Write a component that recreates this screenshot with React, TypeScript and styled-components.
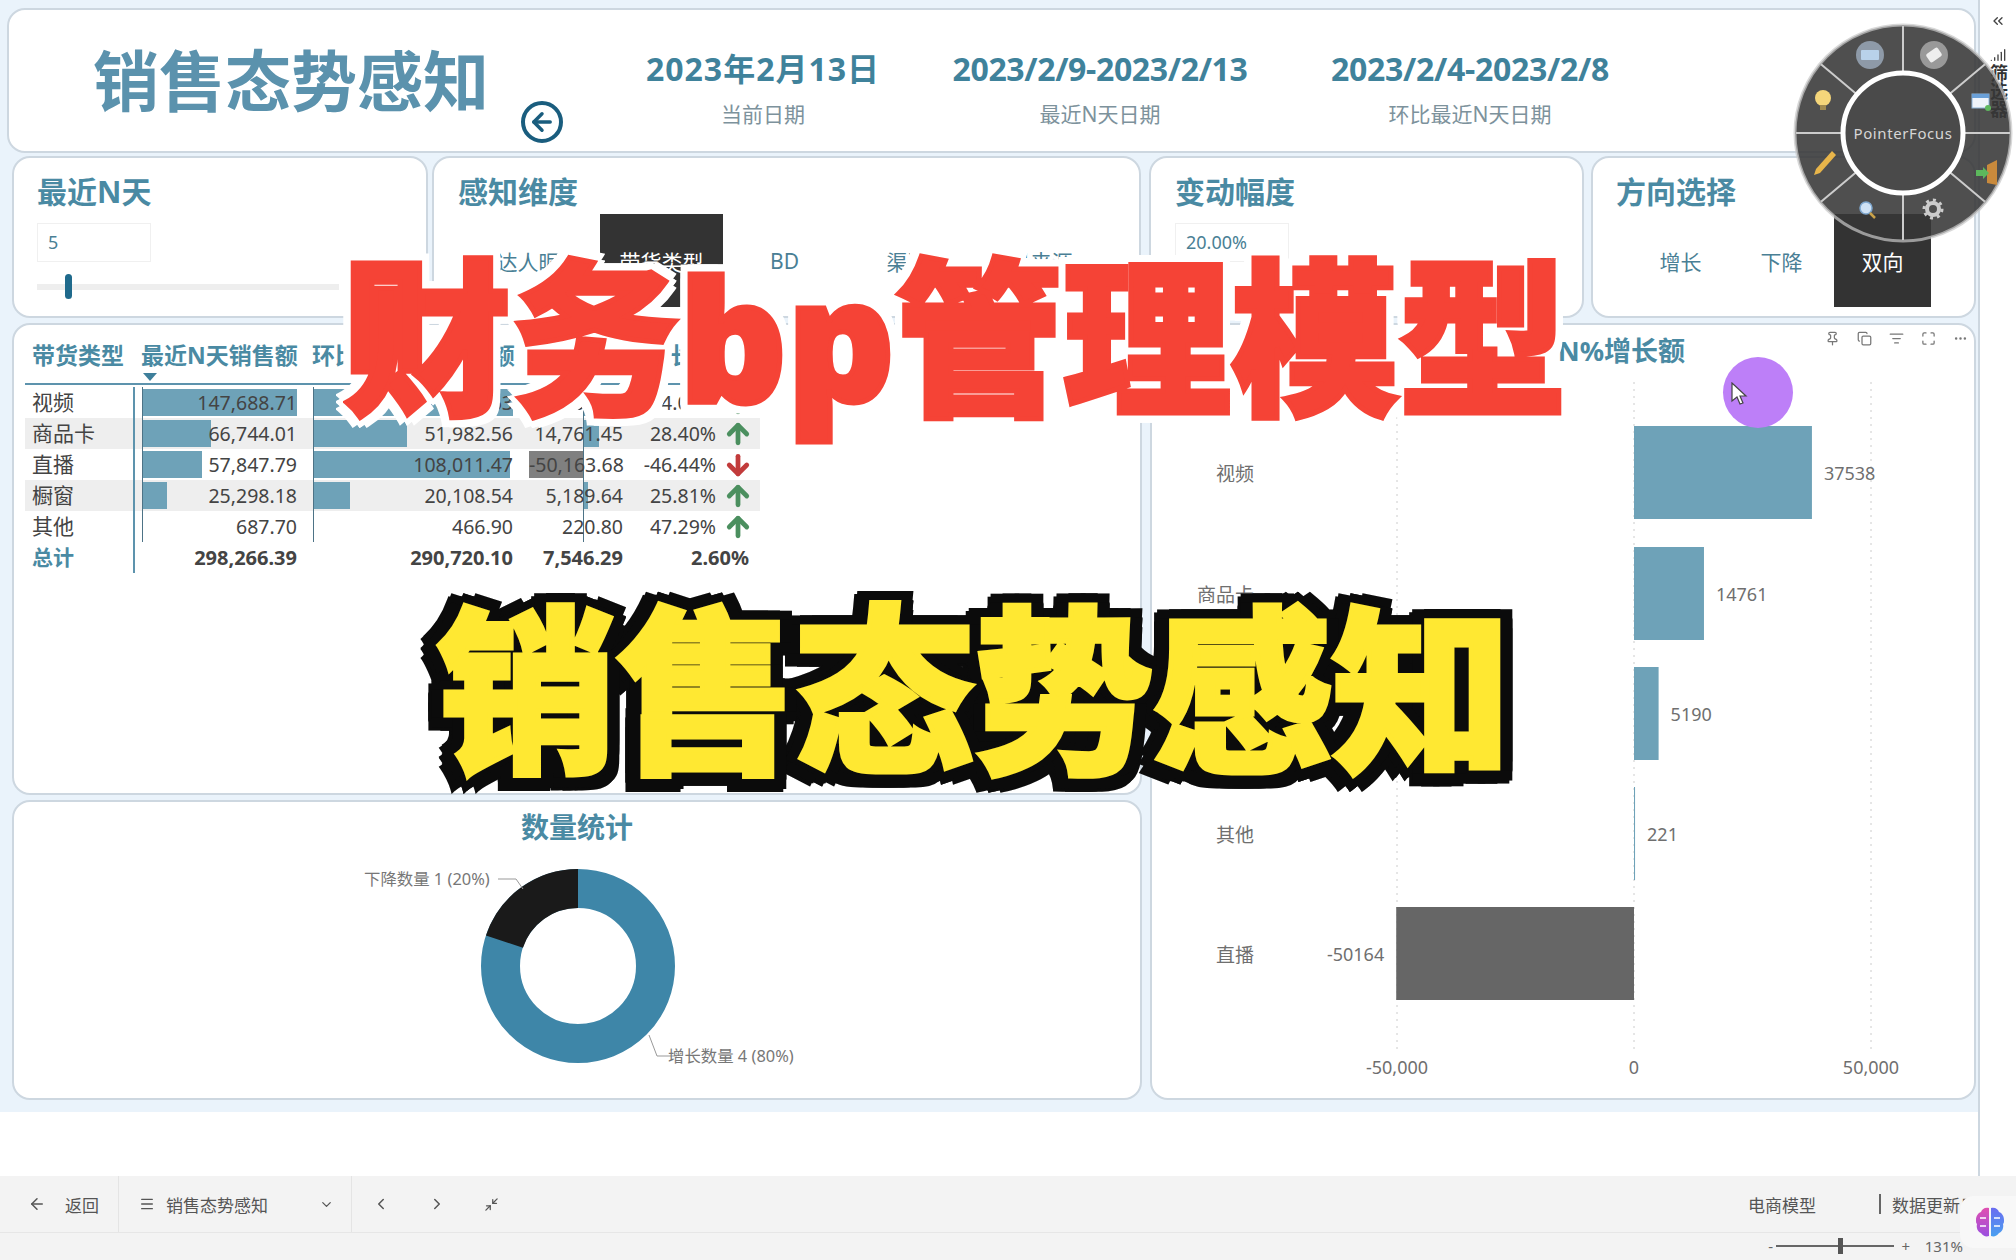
import React from "react";
import styled, { createGlobalStyle } from "styled-components";
import {
  ArrowDown,
  ArrowLeft,
  ArrowUp,
  ChevronDown,
  ChevronLeft,
  ChevronRight,
  ChevronsLeft,
  Copy,
  Ellipsis,
  ListFilter,
  Maximize,
  Menu,
  Minimize2,
  Pin,
  Signal,
} from "lucide-react";

const FONT = `"Noto Sans", "Noto Sans CJK SC", sans-serif`;
const TEAL = "#4a8aa3";
const BAR = "#6ea2b8";
const TABLE_COLUMNS = "117px 171px 216px 111px 76px 43px";

const GlobalStyle = createGlobalStyle`
  html, body { margin: 0; padding: 0; background: #fff; }
  body { font-family: ${FONT}; }
  * { box-sizing: border-box; }
`;

// Page frame
const Page = styled.div`
  position: relative;
  width: 2016px;
  height: 1260px;
  overflow: hidden;
  display: flex;
  flex-direction: column;
`;

const Workspace = styled.div`
  display: flex;
  height: 1176px;
`;

const Canvas = styled.div`
  width: 1978px;
  background: #fff;
`;

const Report = styled.div`
  height: 1112px;
  background: #eaf3fb;
  padding: 8px 2px 0 7px;
  display: flex;
  flex-direction: column;
  gap: 3px;
`;

const Card = styled.div`
  background: #fff;
  border: 2px solid #cdd7e0;
  border-radius: 18px;
`;

// Header
const HeaderCard = styled(Card)`
  height: 145px;
  display: flex;
  padding-left: 84px;
`;

const BigTitle = styled.h1`
  margin: 29px 0 0;
  width: 428px;
  font-size: 66px;
  line-height: 82px;
  font-weight: 700;
  color: #5b92ad;
  white-space: nowrap;
`;

const BackCircle = styled.div`
  width: 42px;
  height: 42px;
  margin: 91px 57px 0 0;
  border: 4px solid #1a5d7e;
  border-radius: 50%;
  color: #1a5d7e;
  display: flex;
  align-items: center;
  justify-content: center;
`;

const DateBlock = styled.div<{ $w: number }>`
  width: ${({ $w }) => $w}px;
  display: flex;
  flex-direction: column;
  align-items: center;
  padding-top: 37px;
`;

const DateValue = styled.div<{ $ls: number }>`
  font-size: 32px;
  line-height: 44px;
  font-weight: 700;
  color: #3f829b;
  white-space: nowrap;
  letter-spacing: ${({ $ls }) => $ls}px;
`;

const DateLabel = styled.div`
  margin-top: 9px;
  font-size: 21px;
  line-height: 28px;
  color: #7d929c;
  white-space: nowrap;
`;

// Slicer row
const SlicerRow = styled.div`
  display: flex;
  margin-left: 5px;
  height: 162px;
`;

const SlicerCard = styled(Card)<{ $w: number; $ml?: number; $pl: number }>`
  width: ${({ $w }) => $w}px;
  margin-left: ${({ $ml }) => $ml ?? 0}px;
  padding: 15px 0 0 ${({ $pl }) => $pl}px;
  overflow: hidden;
`;

const SlicerTitle = styled.h2`
  margin: 0;
  font-size: 30px;
  line-height: 38px;
  font-weight: 700;
  color: ${TEAL};
  white-space: nowrap;
`;

const ValueBox = styled.div`
  width: 114px;
  height: 39px;
  margin-top: 12px;
  padding-left: 10px;
  border: 1px solid #f0f0f0;
  font-size: 18px;
  line-height: 37px;
  color: #4a7f95;
`;

const SliderTrack = styled.div`
  position: relative;
  width: 302px;
  height: 6px;
  margin-top: 22px;
  background: #eee;
`;

const SliderThumb = styled.div`
  position: absolute;
  left: 28px;
  top: -10px;
  width: 7px;
  height: 25px;
  border-radius: 4px;
  background: #1f6a8c;
`;

const TileRow = styled.div<{ $gap: number; $ml: number }>`
  display: flex;
  gap: ${({ $gap }) => $gap}px;
  margin: 3px 0 0 ${({ $ml }) => $ml}px;
`;

const Tile = styled.div<{ $w: number; $active?: boolean }>`
  width: ${({ $w }) => $w}px;
  height: 93px;
  display: flex;
  align-items: center;
  justify-content: center;
  font-size: 21px;
  white-space: nowrap;
  color: ${({ $active }) => ($active ? "#fff" : "#4a7f95")};
  background: ${({ $active }) => ($active ? "#333" : "transparent")};
`;

// Lower grid
const LowerGrid = styled.div`
  display: grid;
  grid-template-columns: 1130px 826px;
  grid-template-rows: 472px 300px;
  column-gap: 8px;
  row-gap: 5px;
  margin: 2px 0 0 5px;
`;

const TableCard = styled(Card)`
  padding: 10px 0 0 11px;
`;

const TableHead = styled.div`
  display: grid;
  grid-template-columns: ${TABLE_COLUMNS};
  width: 735px;
  height: 50px;
  margin-bottom: 2px;
  border-bottom: 2px solid #5d93ad;
`;

const HeadCell = styled.div<{ $right?: boolean }>`
  position: relative;
  font-size: 23px;
  line-height: 40px;
  font-weight: 700;
  color: ${TEAL};
  white-space: nowrap;
  text-align: ${({ $right }) => ($right ? "right" : "left")};
  padding-left: ${({ $right }) => ($right ? 0 : 7)}px;
`;

const FirstHead = styled(HeadCell)`
  padding-left: 7px;
`;

const SecondHead = styled(HeadCell)`
  padding-left: 0;
  margin-left: -1px;
`;

const RightHead = styled(HeadCell)<{ $pr: number }>`
  padding-right: ${({ $pr }) => $pr}px;
`;

const SortMark = styled.span`
  position: absolute;
  left: 2px;
  top: 38px;
  width: 0;
  height: 0;
  border-left: 7px solid transparent;
  border-right: 7px solid transparent;
  border-top: 8px solid #3e7f9b;
`;

const TableRow = styled.div<{ $striped?: boolean }>`
  display: grid;
  grid-template-columns: ${TABLE_COLUMNS};
  width: 735px;
  height: 31px;
  align-items: center;
  background: ${({ $striped }) => ($striped ? "#eee" : "transparent")};
`;

const NameCell = styled.div<{ $total?: boolean }>`
  position: relative;
  height: 100%;
  padding-left: 7px;
  font-size: 21px;
  line-height: 31px;
  font-weight: ${({ $total }) => ($total ? 700 : 400)};
  color: ${({ $total }) => ($total ? TEAL : "#444")};

  &::after {
    content: "";
    position: absolute;
    left: 108px;
    top: 0;
    bottom: 0;
    width: 2px;
    background: #5d93ad;
  }
`;

const NumCell = styled.div<{ $pr: number; $total?: boolean; $span?: number }>`
  position: relative;
  height: 100%;
  grid-column: span ${({ $span }) => $span ?? 1};
  padding-right: ${({ $pr }) => $pr}px;
  font-size: ${({ $total }) => ($total ? 20 : 19.5)}px;
  line-height: 31px;
  text-align: right;
  font-weight: ${({ $total }) => ($total ? 700 : 400)};
  color: #444;
  white-space: nowrap;
`;

const CellText = styled.span`
  position: relative;
`;

const DataBar = styled.div<{ $dark?: boolean }>`
  position: absolute;
  top: 2px;
  height: 27px;
  background: ${({ $dark }) => ($dark ? "#808080" : BAR)};
`;

const Rule = styled.div<{ $x: number }>`
  position: absolute;
  left: ${({ $x }) => $x}px;
  top: 0;
  bottom: 0;
  width: 1px;
  background: #4d7386;
`;

const ArrowCell = styled.div<{ $up: boolean }>`
  display: flex;
  justify-content: center;
  color: ${({ $up }) => ($up ? "#4b8f5f" : "#c23b3b")};
`;

const DonutCard = styled(Card)`
  display: flex;
  flex-direction: column;
`;

const CenterTitle = styled.h2`
  margin: 0;
  height: 50px;
  padding-top: 6px;
  text-align: center;
  font-size: 28px;
  line-height: 38px;
  font-weight: 700;
  color: ${TEAL};
`;

const ChartCard = styled(Card)`
  grid-column: 2;
  grid-row: 1 / span 2;
  display: flex;
  flex-direction: column;
`;

const ChartHead = styled.div`
  display: flex;
  height: 57px;
`;

const ChartTitle = styled.h2`
  margin: 0;
  width: 533px;
  padding-top: 7px;
  text-align: right;
  font-size: 27px;
  line-height: 38px;
  font-weight: 700;
  color: ${TEAL};
  white-space: nowrap;
`;

const ChartTools = styled.div`
  display: flex;
  gap: 17px;
  margin: 6px 0 0 auto;
  padding-right: 6px;
  color: #777;
`;

const AxisText = styled.text`
  font-family: ${FONT};
  font-size: 18px;
  fill: #6f6f6f;
`;

const CategoryText = styled(AxisText)`
  font-size: 19px;
`;

const SmallLabel = styled.text`
  font-family: ${FONT};
  font-size: 16.4px;
  fill: #777;
`;

// Sidebar
const SideRail = styled.div`
  width: 38px;
  border-left: 2px solid #cdd7e0;
  background: #fff;
  display: flex;
  flex-direction: column;
  align-items: center;
  padding-top: 13px;
  color: #444;
`;

const RailSignal = styled.div`
  margin-top: 17px;
  height: 18px;
`;

const RailLabel = styled.div`
  writing-mode: vertical-rl;
  font-size: 18px;
  font-weight: 700;
  color: #333;
  line-height: 20px;
`;

// Footer
const Footer = styled.div`
  height: 84px;
  background: #f3f3f3;
  font-size: 17px;
  color: #555;
`;

const ToolRow = styled.div`
  display: flex;
  height: 57px;
  border-bottom: 1px solid #e6e6e6;
`;

const BackGroup = styled.div`
  width: 119px;
  padding-left: 28px;
  display: flex;
  align-items: center;
  gap: 19px;
  border-right: 1px solid #e4e4e4;
`;

const MenuGroup = styled.div`
  width: 233px;
  padding-left: 20px;
  display: flex;
  align-items: center;
  gap: 11px;
  border-right: 1px solid #e4e4e4;
`;

const MenuChevron = styled.div`
  margin-left: auto;
  padding-right: 17px;
  display: flex;
`;

const NavGroup = styled.div`
  display: flex;
  align-items: center;
  gap: 38px;
  padding-left: 20px;
`;

const RightGroup = styled.div`
  width: 268px;
  margin-left: auto;
  display: flex;
  align-items: center;
  overflow: hidden;
  white-space: nowrap;
`;

const RightDivider = styled.div`
  width: 2px;
  height: 20px;
  margin: 0 11px 0 63px;
  background: #666;
`;

const ZoomRow = styled.div`
  height: 26px;
  display: flex;
  align-items: center;
  justify-content: flex-end;
  padding-right: 53px;
  font-size: 15px;
  color: #666;
`;

const ZoomSign = styled.span<{ $w: number }>`
  width: ${({ $w }) => $w}px;
  text-align: center;
`;

const ZoomTrack = styled.div`
  position: relative;
  width: 118px;
  height: 2px;
  background: #666;
`;

const ZoomThumb = styled.div`
  position: absolute;
  left: 62px;
  top: -7px;
  width: 5px;
  height: 16px;
  background: #555;
`;

const ZoomValue = styled.span`
  margin-left: 7px;
`;

const BrainBadge = styled.div`
  position: absolute;
  left: 1960px;
  top: 1196px;
  width: 70px;
  height: 52px;
  padding-left: 15px;
  display: flex;
  align-items: center;
  border-radius: 14px;
  background: #f8f8f8;
`;

// Overlays
const Radial = styled.svg`
  position: absolute;
  left: 1790px;
  top: 20px;
`;

const RadialName = styled.text`
  font-family: ${FONT};
  font-size: 15px;
  letter-spacing: 0.6px;
  fill: #d6d6d6;
`;

const PointerHalo = styled.div`
  position: absolute;
  left: 1723px;
  top: 357px;
  width: 70px;
  height: 71px;
  border-radius: 50%;
  background: #bd7ff8;
`;

const PointerArrow = styled.svg`
  position: absolute;
  left: 1731px;
  top: 382px;
`;

const RedBanner = styled.div`
  position: absolute;
  left: 343px;
  top: 212px;
  font-size: 168px;
  line-height: 250px;
  font-weight: 900;
  white-space: nowrap;
  color: #f54336;
  -webkit-text-stroke: 5px #f54336;
  filter: drop-shadow(7px 0 0 #fff) drop-shadow(-7px 0 0 #fff) drop-shadow(0 7px 0 #fff) drop-shadow(0 -7px 0 #fff);
`;

const YellowBanner = styled.div`
  position: absolute;
  left: 437px;
  top: 565px;
  font-size: 179px;
  line-height: 250px;
  font-weight: 900;
  white-space: nowrap;
  color: #ffe832;
  -webkit-text-stroke: 5px #ffe832;
  filter: drop-shadow(12px 0 0 #0b0b0b) drop-shadow(-12px 0 0 #0b0b0b) drop-shadow(0 10px 0 #0b0b0b) drop-shadow(0 -9px 0 #0b0b0b) drop-shadow(-3px 3px 0 #0b0b0b);
`;

type Row = {
  name: string;
  cur: string;
  curBar: number;
  prev: string;
  prevBar: number;
  delta: string;
  deltaBar: number;
  pct: string;
  up: boolean;
};

const rows: Row[] = [
  { name: "视频", cur: "147,688.71", curBar: 155, prev: "110,150.63", prevBar: 200, delta: "37,538.08", deltaBar: 30, pct: "34.08%", up: true },
  { name: "商品卡", cur: "66,744.01", curBar: 69, prev: "51,982.56", prevBar: 94, delta: "14,761.45", deltaBar: 16, pct: "28.40%", up: true },
  { name: "直播", cur: "57,847.79", curBar: 60, prev: "108,011.47", prevBar: 197, delta: "-50,163.68", deltaBar: -54, pct: "-46.44%", up: false },
  { name: "橱窗", cur: "25,298.18", curBar: 25, prev: "20,108.54", prevBar: 37, delta: "5,189.64", deltaBar: 5, pct: "25.81%", up: true },
  { name: "其他", cur: "687.70", curBar: 0, prev: "466.90", prevBar: 0, delta: "220.80", deltaBar: 0, pct: "47.29%", up: true },
];

const growth = [
  { name: "视频", value: 37538, y: 44 },
  { name: "商品卡", value: 14761, y: 165 },
  { name: "橱窗", value: 5190, y: 285 },
  { name: "其他", value: 221, y: 405 },
  { name: "直播", value: -50164, y: 525 },
];

function SalesTable() {
  return (
    <TableCard>
      <TableHead>
        <FirstHead>带货类型</FirstHead>
        <SecondHead>
          最近N天销售额
          <SortMark />
        </SecondHead>
        <SecondHead>环比最近N天销售额</SecondHead>
        <RightHead $right $pr={17}>增长额</RightHead>
        <RightHead $right $pr={0}>增长率</RightHead>
      </TableHead>
      {rows.map((r, i) => (
        <TableRow key={r.name} $striped={i % 2 === 1}>
          <NameCell>{r.name}</NameCell>
          <NumCell $pr={16}>
            <DataBar style={{ left: 0, width: r.curBar }} />
            <Rule $x={0} />
            <CellText>{r.cur}</CellText>
          </NumCell>
          <NumCell $pr={16}>
            <DataBar style={{ left: 0, width: r.prevBar }} />
            <Rule $x={0} />
            <CellText>{r.prev}</CellText>
          </NumCell>
          <NumCell $pr={17}>
            <DataBar
              $dark={r.deltaBar < 0}
              style={r.deltaBar < 0 ? { left: 54 + r.deltaBar, width: -r.deltaBar } : { left: 54, width: r.deltaBar }}
            />
            <Rule $x={54} />
            <CellText>{r.delta}</CellText>
          </NumCell>
          <NumCell $pr={0}>{r.pct}</NumCell>
          <ArrowCell $up={r.up}>
            {r.up ? <ArrowUp size={30} strokeWidth={3.8} /> : <ArrowDown size={30} strokeWidth={3.8} />}
          </ArrowCell>
        </TableRow>
      ))}
      <TableRow>
        <NameCell $total>总计</NameCell>
        <NumCell $pr={16} $total>298,266.39</NumCell>
        <NumCell $pr={16} $total>290,720.10</NumCell>
        <NumCell $pr={17} $total>7,546.29</NumCell>
        <NumCell $pr={10} $total $span={2}>2.60%</NumCell>
      </TableRow>
    </TableCard>
  );
}

function CountDonut() {
  return (
    <DonutCard>
      <CenterTitle>数量统计</CenterTitle>
      <svg width="1126" height="246" viewBox="0 0 1126 246">
        <g transform="rotate(-90 564 114)" fill="none" strokeWidth="39">
          <circle cx="564" cy="114" r="77.5" stroke="#3e86a8" />
          <circle cx="564" cy="114" r="77.5" stroke="#1a1a1a" strokeDasharray="97.4 389.5" strokeDashoffset="97.4" />
        </g>
        <SmallLabel x="350" y="33">下降数量 1 (20%)</SmallLabel>
        <path d="M484 27h18l7 10" fill="none" stroke="#999" />
        <path d="M636 184l8 21h20" fill="none" stroke="#999" transform="translate(-1 -1)" />
        <SmallLabel x="654" y="210">增长数量 4 (80%)</SmallLabel>
      </svg>
    </DonutCard>
  );
}

function GrowthChart() {
  const zero = 482;
  const scale = 237 / 50000;
  return (
    <ChartCard>
      <ChartHead>
        <ChartTitle>N%增长额</ChartTitle>
        <ChartTools>
          <Pin size={15} />
          <Copy size={15} />
          <ListFilter size={15} />
          <Maximize size={15} />
          <Ellipsis size={15} />
        </ChartTools>
      </ChartHead>
      <svg width="822" height="716" viewBox="0 0 822 716">
        {[245, 482, 719].map((x) => (
          <line key={x} x1={x} x2={x} y1="0" y2="672" stroke="#ccc" strokeDasharray="2 5" />
        ))}
        {growth.map((g) => {
          const w = Math.max(Math.abs(g.value) * scale, 1);
          const neg = g.value < 0;
          return (
            <g key={g.name}>
              <rect x={neg ? zero - w : zero} y={g.y} width={w} height={93} fill={neg ? "#666" : BAR} />
              <CategoryText x={102} y={g.y + 55} textAnchor="end">{g.name}</CategoryText>
              <AxisText x={neg ? zero - w - 12 : zero + w + 12} y={g.y + 54} textAnchor={neg ? "end" : "start"}>
                {g.value}
              </AxisText>
            </g>
          );
        })}
        <AxisText x="245" y="692" textAnchor="middle">-50,000</AxisText>
        <AxisText x="482" y="692" textAnchor="middle">0</AxisText>
        <AxisText x="719" y="692" textAnchor="middle">50,000</AxisText>
      </svg>
    </ChartCard>
  );
}

function PointerMenu() {
  const cx = 113;
  const cy = 113;
  const spokes = [0, 50, 90, 130, 180, 230, 270, 310];
  return (
    <Radial width="226" height="226" viewBox="0 0 226 226">
      <circle cx={cx} cy={cy} r="108" fill="rgba(55,55,55,0.88)" stroke="rgba(200,200,200,0.7)" strokeWidth="3" />
      {spokes.map((a) => {
        const t = ((a - 90) * Math.PI) / 180;
        return (
          <line
            key={a}
            x1={cx + 60 * Math.cos(t)}
            y1={cy + 60 * Math.sin(t)}
            x2={cx + 107 * Math.cos(t)}
            y2={cy + 107 * Math.sin(t)}
            stroke="#ccc"
            strokeWidth="2"
          />
        );
      })}
      <circle cx={cx} cy={cy} r="60" fill="#4a4a4a" stroke="#fff" strokeWidth="5" />
      <RadialName x={cx} y={cy + 6} textAnchor="middle">PointerFocus</RadialName>
      {/* keyboard */}
      <circle cx="80" cy="35" r="14" fill="#8e9aa8" />
      <rect x="71" y="30" width="18" height="10" rx="1" fill="#b9d2ea" />
      {/* eraser */}
      <circle cx="144" cy="35" r="14" fill="#999" />
      <rect x="137" y="30" width="14" height="10" rx="2" fill="#eee" transform="rotate(-35 144 35)" />
      {/* bulb */}
      <circle cx="33" cy="78" r="8" fill="#f5d67a" />
      <rect x="30" y="85" width="6" height="5" fill="#a08a50" />
      {/* window */}
      <rect x="182" y="74" width="17" height="14" fill="#eef3fa" stroke="#8db3d8" />
      <rect x="182" y="74" width="17" height="4" fill="#6aa0d8" />
      <circle cx="198" cy="88" r="3" fill="#5fb85f" />
      {/* pencil */}
      <path d="M26 149l16-18 4 4-16 18-6 2z" fill="#e8b54a" />
      {/* door */}
      <path d="M197 145l10-5v25l-10-2z" fill="#c98a3c" />
      <path d="M186 150h7v-3l6 6-6 6v-3h-7z" fill="#5cb85c" />
      {/* magnifier */}
      <circle cx="76" cy="188" r="6" fill="#cfe2f5" stroke="#7fa8d0" strokeWidth="1.5" />
      <line x1="80" y1="193" x2="85" y2="198" stroke="#c9a24a" strokeWidth="2.5" />
      {/* gear */}
      <circle cx="143" cy="189" r="6" fill="none" stroke="#ccc" strokeWidth="4" />
      <circle cx="143" cy="189" r="9" fill="none" stroke="#ccc" strokeWidth="3" strokeDasharray="3 4" />
    </Radial>
  );
}

function BrainIcon() {
  return (
    <svg width="30" height="32" viewBox="0 0 30 32">
      <defs>
        <linearGradient id="brainLeft" x1="0" y1="0" x2="0" y2="1">
          <stop offset="0" stopColor="#e04fb0" />
          <stop offset="1" stopColor="#9a4fe0" />
        </linearGradient>
        <linearGradient id="brainRight" x1="0" y1="0" x2="0" y2="1">
          <stop offset="0" stopColor="#6a6cf0" />
          <stop offset="1" stopColor="#4aa0f0" />
        </linearGradient>
      </defs>
      <path d="M14 2c-4-1-7 1-8 4-3 1-5 4-5 8 0 2 0 3 1 4-1 4 1 8 4 9 2 3 5 4 8 3z" fill="url(#brainLeft)" />
      <path d="M16 2c4-1 7 1 8 4 3 1 5 4 5 8 0 2 0 3-1 4 1 4-1 8-4 9-2 3-5 4-8 3z" fill="url(#brainRight)" />
      <path d="M5 12h6M5 20h6M19 12h6M19 20h6" stroke="#fff" strokeWidth="1.5" fill="none" />
    </svg>
  );
}

export default function App() {
  return (
    <Page>
      <GlobalStyle />
      <Workspace>
        <Canvas>
          <Report>
            <HeaderCard>
              <BigTitle>销售态势感知</BigTitle>
              <BackCircle>
                <ArrowLeft size={28} strokeWidth={3} />
              </BackCircle>
              <DateBlock $w={286}>
                <DateValue $ls={1}>2023年2月13日</DateValue>
                <DateLabel>当前日期</DateLabel>
              </DateBlock>
              <DateBlock $w={388}>
                <DateValue $ls={-0.35}>2023/2/9-2023/2/13</DateValue>
                <DateLabel>最近N天日期</DateLabel>
              </DateBlock>
              <DateBlock $w={352}>
                <DateValue $ls={-0.3}>2023/2/4-2023/2/8</DateValue>
                <DateLabel>环比最近N天日期</DateLabel>
              </DateBlock>
            </HeaderCard>

            <SlicerRow>
              <SlicerCard $w={416} $pl={23}>
                <SlicerTitle>最近N天</SlicerTitle>
                <ValueBox>5</ValueBox>
                <SliderTrack>
                  <SliderThumb />
                </SliderTrack>
              </SlicerCard>
              <SlicerCard $w={709} $ml={4} $pl={24}>
                <SlicerTitle>感知维度</SlicerTitle>
                <TileRow $gap={0} $ml={19}>
                  <Tile $w={123}>达人昵称</Tile>
                  <Tile $w={123} $active>带货类型</Tile>
                  <Tile $w={123}>BD</Tile>
                  <Tile $w={123}>渠道</Tile>
                  <Tile $w={123}>流量来源</Tile>
                </TileRow>
              </SlicerCard>
              <SlicerCard $w={435} $ml={8} $pl={24}>
                <SlicerTitle>变动幅度</SlicerTitle>
                <ValueBox>20.00%</ValueBox>
              </SlicerCard>
              <SlicerCard $w={385} $ml={7} $pl={23}>
                <SlicerTitle>方向选择</SlicerTitle>
                <TileRow $gap={4} $ml={16}>
                  <Tile $w={97}>增长</Tile>
                  <Tile $w={97}>下降</Tile>
                  <Tile $w={97} $active>双向</Tile>
                </TileRow>
              </SlicerCard>
            </SlicerRow>

            <LowerGrid>
              <SalesTable />
              <GrowthChart />
              <CountDonut />
            </LowerGrid>
          </Report>
        </Canvas>
        <SideRail>
          <ChevronsLeft size={16} />
          <RailSignal>
            <Signal size={16} />
          </RailSignal>
          <RailLabel>筛选器</RailLabel>
        </SideRail>
      </Workspace>

      <Footer>
        <ToolRow>
          <BackGroup>
            <ArrowLeft size={18} />
            返回
          </BackGroup>
          <MenuGroup>
            <Menu size={16} />
            销售态势感知
            <MenuChevron>
              <ChevronDown size={15} />
            </MenuChevron>
          </MenuGroup>
          <NavGroup>
            <ChevronLeft size={18} />
            <ChevronRight size={18} />
            <Minimize2 size={15} />
          </NavGroup>
          <RightGroup>
            电商模型
            <RightDivider />
            数据更新日期
          </RightGroup>
        </ToolRow>
        <ZoomRow>
          <ZoomSign $w={10}>-</ZoomSign>
          <ZoomTrack>
            <ZoomThumb />
          </ZoomTrack>
          <ZoomSign $w={24}>+</ZoomSign>
          <ZoomValue>131%</ZoomValue>
        </ZoomRow>
      </Footer>

      <BrainBadge>
        <BrainIcon />
      </BrainBadge>
      <PointerMenu />
      <PointerHalo />
      <PointerArrow width="18" height="24" viewBox="0 0 18 24">
        <path d="M1 1v18l5-4 3 7 3-1-3-7h6z" fill="#fff" stroke="#444" strokeWidth="1.2" />
      </PointerArrow>
      <RedBanner>财务bp管理模型</RedBanner>
      <YellowBanner>销售态势感知</YellowBanner>
    </Page>
  );
}
